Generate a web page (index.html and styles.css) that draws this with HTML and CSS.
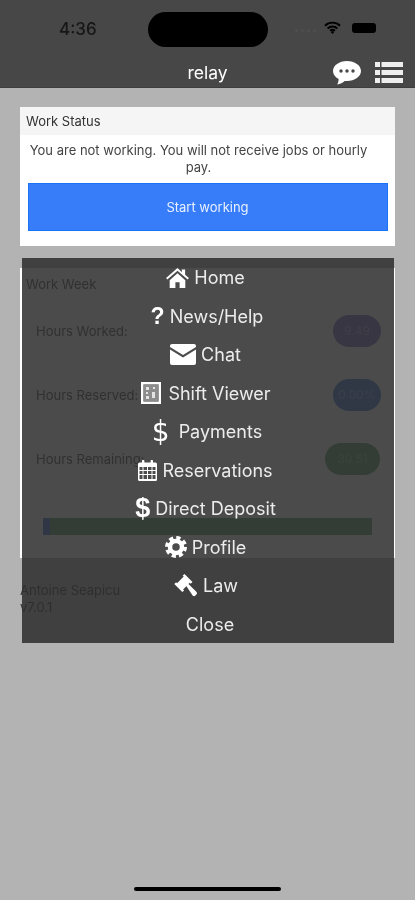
FILE: index.html
```html
<!DOCTYPE html>
<html lang="en">
<head>
<meta charset="utf-8">
<title>relay</title>
<link rel="stylesheet" href="styles.css">
</head>
<body>
<div class="screen">
  <header class="top">
    <div class="status">
      <span class="time">4:36</span>
      <span class="island"></span>
      <div class="sys">
        <span class="signal"><i></i><i></i><i></i><i></i></span>
        <svg class="wifi" viewBox="0 0 18 13"><path d="M1 4.600a11.500 11.500 0 0 1 16 0M3.800 7.500a7.500 7.500 0 0 1 10.400 0M6.400 10a3.800 3.800 0 0 1 5.200 0" fill="none" stroke="#000" stroke-width="2"/><circle cx="9" cy="11.600" r="1.400"/></svg>
        <span class="battery"></span>
      </div>
    </div>
    <div class="nav">
      <span></span>
      <span class="title">relay</span>
      <div class="actions">
        <svg class="chat" viewBox="0 0 28 24"><path fill="#fff" d="M14 0C6.300 0 0 4.400 0 10c0 3.300 2.200 6.200 5.600 8 .1 2-.7 3.900-1.300 5.400 2.900-.5 5.400-1.800 7.400-3.500.7.100 1.500.1 2.300.1 7.700 0 14-4.400 14-10S21.700 0 14 0z"/><circle cx="8" cy="10" r="1.700" fill="#474747"/><circle cx="14" cy="10" r="1.700" fill="#474747"/><circle cx="20" cy="10" r="1.700" fill="#474747"/></svg>
        <svg class="list" viewBox="0 0 28 21"><g fill="#eee"><rect width="5" height="5"/><rect x="6.500" width="21.500" height="5"/><rect y="8" width="5" height="5"/><rect x="6.500" y="8" width="21.500" height="5"/><rect y="16" width="5" height="5"/><rect x="6.500" y="16" width="21.500" height="5"/></g></svg>
      </div>
    </div>
  </header>

  <main class="content">
    <section class="card card-status">
      <h2 class="card-head">Work Status</h2>
      <p class="notice">You are not working. You will not receive jobs or hourly pay.</p>
      <button class="start">Start working</button>
    </section>

    <section class="card card-week">
      <h2 class="week-head">Work Week</h2>
      <div class="row"><span>Hours Worked:</span><span class="pill purple">9.49</span></div>
      <div class="row"><span>Hours Reserved:</span><span class="pill blue">0.00%</span></div>
      <div class="row"><span>Hours Remaining:</span><span class="pill green wide">30.51</span></div>
      <div class="bar"><span class="bar-a"></span><span class="bar-b"></span></div>
    </section>

    <p class="user">Antoine Seapicu<br>v7.0.1</p>
  </main>

  <span class="home-bar"></span>

  <nav class="menu">
    <a class="item"><svg class="ico i-home" viewBox="0 0 24 21"><path d="M12 0 0 10.600l1.300 1.500L12 2.800l10.700 9.300 1.300-1.500-4-3.500V1.500h-3.500v2.900z"/><path d="M3.800 12.800 12 5.600l8.200 7.200V21h-6v-6h-4.400v6h-6z"/></svg>Home</a>
    <a class="item item-news"><span class="glyph g-q">?</span>News/Help</a>
    <a class="item"><svg class="ico i-mail" viewBox="0 0 26 21"><path d="M2 0h22a2 2 0 0 1 2 2v1L13 11 0 3V2a2 2 0 0 1 2-2z"/><path d="M0 5.500 13 13.500 26 5.500V19a2 2 0 0 1-2 2H2a2 2 0 0 1-2-2z"/></svg>Chat</a>
    <a class="item item-shift"><svg class="ico i-shift" viewBox="0 0 20 22"><path fill-rule="evenodd" d="M0 0h20v22H0zM2.500 2.500v17h15v-17z"/><path fill="#8c8c8c" d="M2.500 2.500h15v17h-15z"/><path fill="#e4e4e4" d="M5 5h3v3H5zM12 5h2v2h-2zM5 10h2v2H5zM11 10h3v6h-3zM5 14h3v3H5z"/></svg>Shift Viewer</a>
    <a class="item item-pay"><span class="glyph g-pay">$</span>Payments</a>
    <a class="item"><svg class="ico i-cal" viewBox="0 0 19 21"><path fill-rule="evenodd" d="M1.500 2.500H4V1a1 1 0 0 1 2.400 0v1.500h6.200V1A1 1 0 0 1 15 1v1.500h2.500A1.500 1.500 0 0 1 19 4v15.500a1.500 1.500 0 0 1-1.500 1.500h-16A1.500 1.500 0 0 1 0 19.500V4a1.500 1.500 0 0 1 1.500-1.500zM1.500 7v3h3V7zM5.500 7v3h3.500V7zM10 7v3h3.500V7zM14.500 7v3h3V7zM1.500 11v3h3v-3zM5.500 11v3h3.500v-3zM10 11v3h3.500v-3zM14.500 11v3h3v-3zM1.500 15v4h3v-4zM5.500 15v4h3.500v-4zM10 15v4h3.500v-4zM14.500 15v4h3v-4z"/></svg>Reservations</a>
    <a class="item"><span class="glyph g-dep">$</span>Direct Deposit</a>
    <a class="item"><svg class="ico i-cog" viewBox="0 0 22 22"><circle cx="11" cy="11" r="6" fill="none" stroke="#fff" stroke-width="4.500"/><circle cx="11" cy="11" r="9" fill="none" stroke="#fff" stroke-width="4" stroke-dasharray="4.070 3"/></svg>Profile</a>
    <a class="item"><svg class="ico i-law" viewBox="0 0 24 24"><path d="M11.500 0l8 8-1.800 1.800-1-1-6.600 6.600 1 1L9.300 18l-8-8 1.800-1.800 1 1 6.600-6.600-1-1z"/><path d="M13 11.500l2-2 8.300 8.300a2 2 0 0 1 0 2.800l-.9.900a2 2 0 0 1-2.800 0z"/></svg>Law</a>
    <a class="item item-close">Close</a>
  </nav>
</div>
</body>
</html>
```

FILE: styles.css
```css
* { box-sizing: border-box; }
html, body { margin: 0; padding: 0; }
body { font-family: Inter, "Liberation Sans", sans-serif; background: #b3b3b3; }

.screen {
  position: relative;
  width: 415px;
  height: 900px;
  display: flex;
  flex-direction: column;
  overflow: hidden;
  background: #b3b3b3;
  filter: blur(0.45px);
}

.top { background: #474747; height: 88px; border-bottom: 1px solid #3d3d3d; flex: none; }

.status { position: relative; height: 58px; display: flex; align-items: flex-start; }
.time { margin: 19px 0 0 59px; font-size: 17px; font-weight: 500; line-height: 20px; color: #161616; }
.island { position: absolute; left: 148px; top: 12px; width: 120px; height: 35px; border-radius: 18px; background: #000; }
.sys { position: absolute; left: 295px; top: 21px; display: flex; align-items: center; }
.signal { display: flex; gap: 3px; width: 29px; }
.signal i { width: 3px; height: 3px; border-radius: 50%; background: #4f4f4f; margin-top: 6px; }
.wifi { width: 17px; height: 13px; }
.battery { width: 24px; height: 10px; margin-left: 11px; border-radius: 3px; background: #000; }

.nav { display: grid; grid-template-columns: 1fr auto 1fr; align-items: center; height: 29px; }
.title { color: #fff; font-size: 17.500px; line-height: 29px; }
.actions { display: flex; justify-content: flex-end; align-items: center; gap: 14px; padding-right: 12px; }
.chat { width: 28px; height: 24px; }
.list { width: 28px; height: 21px; }

.content { flex: 1; padding: 19px 20px 0; display: flex; flex-direction: column; }

.card { background: #fff; width: 375px; flex: none; }
.card-status { height: 139px; }
.card-head { margin: 0; height: 28px; padding: 0 6px; background: #f5f5f5; font-size: 13px; font-weight: 400; line-height: 28px; color: #333; }
.notice { margin: 7px 24px 7px 6px; font-size: 13px; line-height: 17px; text-align: center; color: #444; }
.start { display: block; margin: 0 auto; width: 360px; height: 48px; border: 1px solid #1a73f5; background: #377dfa; color: #e8f0ff; font: inherit; font-size: 13px; }

.card-week { position: relative; height: 290px; margin-top: 22px; padding: 6px 22px 0 16px; color: #444; font-size: 13px; }
.week-head { margin: 0 0 21px -10px; font-size: 13px; font-weight: 400; line-height: 20px; }
.row { display: flex; justify-content: space-between; align-items: center; height: 32px; margin-bottom: 32px; white-space: nowrap; }
.pill { display: block; width: 48px; height: 32px; border-radius: 16px; color: rgba(255, 255, 255, 0.35); font-size: 12px; line-height: 32px; text-align: center; margin-right: -8px; }
.pill.wide { width: 55px; margin-right: -7px; }
.purple { background: #7d6cc0; }
.blue { background: #4a7fdc; }
.green { background: #5c9c6c; }
.bar { display: flex; height: 17px; width: 329px; margin: 43px 0 0 7px; }
.bar-a { width: 7px; background: #4a6fdc; }
.bar-b { flex: 1; background: #5c9c6c; }

.user { margin: 24px 0 0; font-size: 13px; line-height: 17px; color: #3a3a3a; }

.home-bar { flex: none; align-self: center; width: 147px; height: 4px; margin-bottom: 9px; border-radius: 2px; background: #000; }

.menu {
  position: absolute;
  left: 22px;
  top: 258px;
  width: 372px;
  height: 385px;
  padding-top: 0.6px;
  display: grid;
  grid-auto-rows: 38.500px;
  background: rgba(44, 44, 44, 0.855);
}
.item {
  display: flex;
  align-items: center;
  justify-content: center;
  gap: 5px;
  color: #ececec;
  font-size: 18px;
  padding-right: 5px;
}
.item-news, .item-pay { padding-right: 2px; }
.item-shift { padding-right: 4px; }
.item-close { padding-right: 0; padding-left: 4px; }
.ico { fill: #fff; flex: none; }
.i-home { width: 23px; height: 20px; }
.i-mail { width: 26px; height: 21px; }
.i-shift { width: 20px; height: 22px; margin-right: 2px; }
.i-cal { width: 19px; height: 21px; }
.i-cog { width: 22px; height: 22px; }
.i-law { width: 24px; height: 24px; margin-right: 1px; }
.glyph { color: #fff; font-family: "Liberation Sans", sans-serif; line-height: 1; }
.g-q { font-size: 23px; font-weight: 700; }
.g-pay { font-family: "DejaVu Sans", sans-serif; font-size: 28px; margin-right: 4px; }
.g-dep { font-size: 27px; font-weight: 700; }
```
